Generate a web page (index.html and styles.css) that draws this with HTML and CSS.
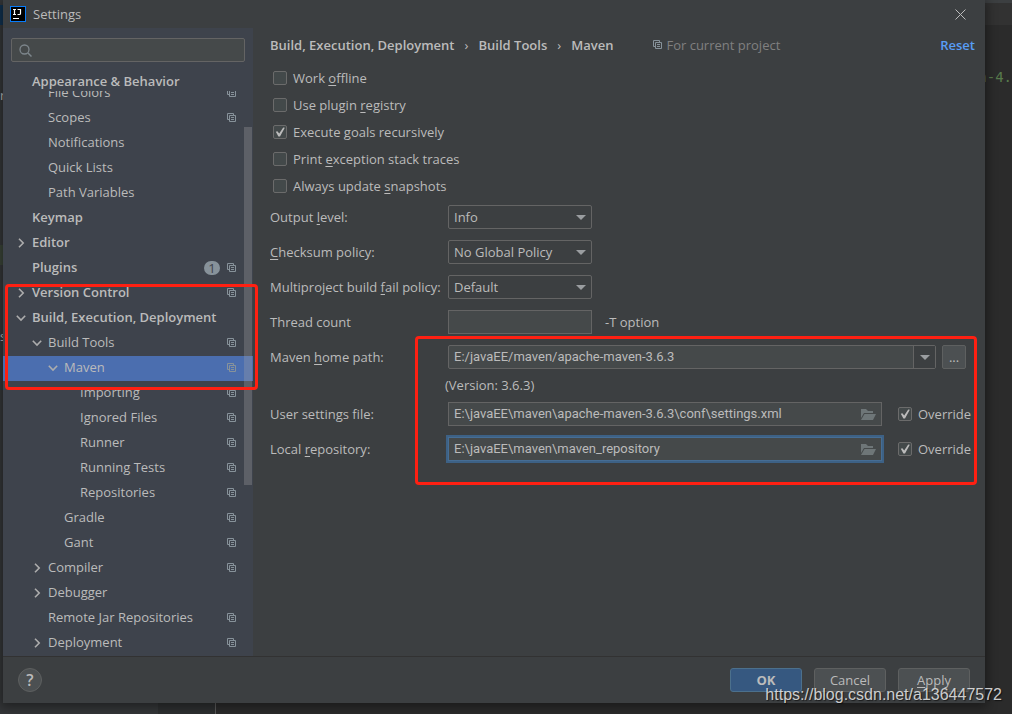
FILE: index.html
```html
<!DOCTYPE html>
<html lang="en">
<head>
<meta charset="utf-8">
<title>Settings</title>
<link rel="stylesheet" href="styles.css">
</head>
<body>
<svg class="defs" aria-hidden="true">
  <symbol id="copy" viewBox="0 0 9 9"><path d="M2 6.500H.5v-6h6V2M2.500 2.500h6v6h-6zM4 4.500h3M4 6.500h3" fill="none" stroke="currentColor"/></symbol>
  <symbol id="right" viewBox="0 0 10 10"><path d="M3 .8l4.200 4.200-4.200 4.200" fill="none" stroke="currentColor" stroke-width="1.600"/></symbol>
  <symbol id="down" viewBox="0 0 10 10"><path d="M.8 2.800l4.200 4.200 4.200-4.200" fill="none" stroke="currentColor" stroke-width="1.600"/></symbol>
  <symbol id="folder" viewBox="0 0 16 12"><path d="M1 10V1h5l2 2h5v2H4z" fill="currentColor"/><path d="M4.500 6H16l-3 6H1z" fill="currentColor"/></symbol>
</svg>

<div class="backdrop" aria-hidden="true">
  <div class="edge-left"><span class="frag frag-tab"></span><span class="frag frag-r">r</span><span class="frag frag-hl"></span><span class="frag frag-s">s</span></div>
  <div class="edge-right"><span class="code">n-4.</span></div>
  <div class="edge-bottom"><span class="gutter"></span></div>
</div>

<main class="dialog">
  <header class="titlebar">
    <svg class="logo" viewBox="0 0 16 16"><path fill="#087cfa" d="M0 0h16v16H0z"/><path fill="#000" d="M1 1h14v14H1z"/><path d="M3 3.500h3M4.500 3v6M3 8.500h3M7.500 3.500h3.500M10.500 3v4.500q0 1-1 1h-2" fill="none" stroke="#fff" stroke-width="1.200"/><path fill="#fff" d="M3 12h6v1H3z"/></svg>
    <h1>Settings</h1>
    <button class="close" aria-label="Close"><svg viewBox="0 0 11 11"><path d="M.5.5l10 10M10.500.5l-10 10" stroke="currentColor" fill="none"/></svg></button>
  </header>

  <div class="body">
    <nav class="sidebar">
      <div class="search">
        <svg viewBox="0 0 13 13"><circle cx="5.500" cy="5.500" r="4.500" fill="none" stroke="currentColor" stroke-width="1.300"/><path d="M9 9l3.500 3.500" stroke="currentColor" stroke-width="1.500"/></svg>
        <input type="text" aria-label="Search settings">
      </div>
      <div class="group-head">Appearance &amp; Behavior</div>
      <div class="viewport">
        <ul class="tree">
          <li class="l1"><i></i><span>File Colors</span><svg class="copy"><use href="#copy"/></svg></li>
          <li class="l1"><i></i><span>Scopes</span><svg class="copy"><use href="#copy"/></svg></li>
          <li class="l1"><i></i><span>Notifications</span></li>
          <li class="l1"><i></i><span>Quick Lists</span></li>
          <li class="l1"><i></i><span>Path Variables</span></li>
          <li class="top"><i></i><span>Keymap</span></li>
          <li class="top"><svg class="arrow"><use href="#right"/></svg><span>Editor</span></li>
          <li class="top"><i></i><span>Plugins</span><b class="badge">1</b><svg class="copy"><use href="#copy"/></svg></li>
          <li class="top"><svg class="arrow"><use href="#right"/></svg><span>Version Control</span><svg class="copy"><use href="#copy"/></svg></li>
          <li class="top"><svg class="arrow"><use href="#down"/></svg><span>Build, Execution, Deployment</span></li>
          <li class="l1"><svg class="arrow"><use href="#down"/></svg><span>Build Tools</span><svg class="copy"><use href="#copy"/></svg></li>
          <li class="l2 selected"><svg class="arrow"><use href="#down"/></svg><span>Maven</span><svg class="copy"><use href="#copy"/></svg></li>
          <li class="l3"><i></i><span>Importing</span><svg class="copy"><use href="#copy"/></svg></li>
          <li class="l3"><i></i><span>Ignored Files</span><svg class="copy"><use href="#copy"/></svg></li>
          <li class="l3"><i></i><span>Runner</span><svg class="copy"><use href="#copy"/></svg></li>
          <li class="l3"><i></i><span>Running Tests</span><svg class="copy"><use href="#copy"/></svg></li>
          <li class="l3"><i></i><span>Repositories</span><svg class="copy"><use href="#copy"/></svg></li>
          <li class="l2"><i></i><span>Gradle</span><svg class="copy"><use href="#copy"/></svg></li>
          <li class="l2"><i></i><span>Gant</span><svg class="copy"><use href="#copy"/></svg></li>
          <li class="l1"><svg class="arrow"><use href="#right"/></svg><span>Compiler</span><svg class="copy"><use href="#copy"/></svg></li>
          <li class="l1"><svg class="arrow"><use href="#right"/></svg><span>Debugger</span></li>
          <li class="l1"><i></i><span>Remote Jar Repositories</span><svg class="copy"><use href="#copy"/></svg></li>
          <li class="l1"><svg class="arrow"><use href="#right"/></svg><span>Deployment</span><svg class="copy"><use href="#copy"/></svg></li>
        </ul>
        <div class="scrollbar"></div>
      </div>
    </nav>

    <section class="content">
      <div class="crumbs">
        <b>Build, Execution, Deployment</b><span class="sep">›</span><b>Build Tools</b><span class="sep">›</span><b>Maven</b>
        <span class="scope"><svg class="copy"><use href="#copy"/></svg>For current project</span>
        <a class="reset" href="#">Reset</a>
      </div>

      <div class="checks">
        <label><input type="checkbox"><span>Work <u>o</u>ffline</span></label>
        <label><input type="checkbox"><span>Use plugin <u>r</u>egistry</span></label>
        <label><input type="checkbox" checked><span>Execute <u>g</u>oals recursively</span></label>
        <label><input type="checkbox"><span>Print <u>e</u>xception stack traces</span></label>
        <label><input type="checkbox"><span>Always update <u>s</u>napshots</span></label>
      </div>

      <form class="form">
        <label for="level">Output <u>l</u>evel:</label>
        <div class="line"><span class="select"><select id="level"><option>Info</option></select></span></div>
        <label for="checksum"><u>C</u>hecksum policy:</label>
        <div class="line"><span class="select"><select id="checksum"><option>No Global Policy</option></select></span></div>
        <label for="fail">Multiproject build <u>f</u>ail policy:</label>
        <div class="line"><span class="select"><select id="fail"><option>Default</option></select></span></div>
        <label for="threads">Thread count</label>
        <div class="line"><input class="field short" id="threads" type="text"><span class="hint">-T option</span></div>
        <label for="home">Maven <u>h</u>ome path:</label>
        <div class="line home"><span class="combo"><input id="home" type="text" value="E:/javaEE/maven/apache-maven-3.6.3"><button type="button" aria-label="Show paths"></button></span><button class="more" type="button">...</button></div>
        <div class="version">(Version: 3.6.3)</div>
        <label for="settings">User settings file:</label>
        <div class="line file"><span class="field path"><input id="settings" type="text" value="E:\javaEE\maven\apache-maven-3.6.3\conf\settings.xml"><svg><use href="#folder"/></svg></span><label class="over"><input type="checkbox" checked><span>Override</span></label></div>
        <label for="repo">Local <u>r</u>epository:</label>
        <div class="line file"><span class="field path focused"><input id="repo" type="text" value="E:\javaEE\maven\maven_repository"><svg><use href="#folder"/></svg></span><label class="over"><input type="checkbox" checked><span>Override</span></label></div>
      </form>
    </section>
  </div>

  <footer class="footer">
    <button class="help" aria-label="Help">?</button>
    <button class="btn primary">OK</button>
    <button class="btn">Cancel</button>
    <button class="btn"><u>A</u>pply</button>
  </footer>
</main>

<div class="mark mark-tree"></div>
<div class="mark mark-form"></div>
<div class="watermark">https://blog.csdn.net/a136447572</div>
</body>
</html>
```
FILE: styles.css
```css
* { box-sizing: border-box; }
body {
  margin: 0;
  position: relative;
  min-height: 100vh;
  overflow: hidden;
  background: #2b2b2b;
  color: #bbbbbb;
  font: 13px/18px "Open Sans", "Noto Sans", sans-serif;
}
input, select, button { font: inherit; color: inherit; }
b { font-weight: 600; }
.defs { position: absolute; width: 0; height: 0; }
u { text-underline-offset: 2px; }

.backdrop { position: absolute; inset: 0; overflow: hidden; }
.edge-left { position: absolute; left: 0; top: 0; bottom: 0; width: 158px; background: #343638; }
.frag { position: absolute; left: 0; width: 3px; overflow: hidden; }
.frag-tab { top: 5px; height: 20px; background: #10314f; }
.frag-r { top: 86px; }
.frag-hl { top: 245px; height: 20px; background: #3a4438; }
.frag-s { top: 327px; }
.edge-right { position: absolute; right: 0; top: 0; width: 60px; height: 25px; background: #323232; border-top: 3px solid #3c3f41; }
.code { position: absolute; right: 0; top: 65px; color: #587a4c; font: 14px/18px "DejaVu Sans Mono", monospace; }
.edge-bottom { position: absolute; left: 158px; right: 0; bottom: 0; height: 14px; display: flex; }
.gutter { width: 58px; background: #2d2f30; border-right: 1px solid #5a5a5a; }

.dialog {
  position: relative;
  margin: 0 27px 11px 3px;
  min-height: calc(100vh - 11px);
  display: flex;
  flex-direction: column;
  background: #3c3f41;
  box-shadow: 0 2px 10px 2px rgba(0, 0, 0, .4);
}
.titlebar { display: flex; align-items: center; gap: 7px; height: 28px; padding: 0 19px 0 7px; }
.logo { width: 16px; height: 16px; }
.titlebar h1 { margin: 0; flex: 1; font-size: 13px; font-weight: 400; }
.close { display: flex; padding: 0; border: 0; background: none; }
.close svg { width: 11px; height: 11px; }

.body { flex: 1; display: flex; }
.sidebar { width: 250px; display: flex; flex-direction: column; background: #3e434c; }
.search {
  display: flex;
  align-items: center;
  gap: 8px;
  height: 24px;
  margin: 10px 8px 8px;
  padding: 0 7px;
  border: 1px solid #646464;
  border-radius: 2px;
  background: #45494a;
}
.search svg { width: 13px; height: 13px; color: #7d868c; }
.search input { flex: 1; min-width: 0; border: 0; outline: 0; background: none; }
.group-head { height: 21px; padding-left: 29px; line-height: 22px; font-weight: 600; }
.viewport { position: relative; flex: 1; overflow: hidden; }
.tree { list-style: none; margin: -10px 0 0; padding: 0; }
.tree li { display: flex; align-items: center; height: 25px; padding-right: 17px; padding-bottom: 2px; line-height: 19px; }
.tree li span { flex: 1; white-space: nowrap; }
.tree i, .arrow { width: 10px; height: 10px; margin-right: 6px; flex: none; }
.arrow { color: #adadad; }
.tree .top { padding-left: 13px; font-weight: 600; }
.l1 { padding-left: 29px; }
.l2 { padding-left: 45px; }
.l3 { padding-left: 61px; }
.copy { width: 9px; height: 9px; color: #87929a; flex: none; }
.selected { background: #4b6eaf; }
.badge {
  width: 16px;
  height: 14px;
  margin-right: 7px;
  border-radius: 7px;
  background: #87929a;
  color: #3e434c;
  font-weight: 400;
  line-height: 14px;
  text-align: center;
}
.scrollbar { position: absolute; right: 1px; top: 36px; width: 8px; height: 358px; background: rgba(166, 166, 166, .3); }

.content { flex: 1; min-width: 0; padding: 7px 10px 0 17px; }
.crumbs { display: flex; align-items: center; height: 19px; white-space: nowrap; }
.sep { width: 24px; text-align: center; }
.scope { display: flex; align-items: center; gap: 4px; margin-left: 40px; color: #808080; }
.reset { margin-left: auto; color: #589df6; font-weight: 600; text-decoration: none; }
.checks { display: flex; flex-direction: column; gap: 9px; margin-top: 15px; padding-left: 3px; }
.checks label, .over { display: flex; align-items: center; gap: 6px; }
input[type="checkbox"] {
  appearance: none;
  position: relative;
  flex: none;
  width: 14px;
  height: 14px;
  margin: 0;
  border: 1px solid #6b6b6b;
  border-radius: 2px;
  background: #43494a;
}
input[type="checkbox"]:checked::before {
  content: "";
  position: absolute;
  inset: 1px;
  background: #bbbbbb;
  clip-path: polygon(8% 48%, 24% 42%, 42% 66%, 82% 4%, 98% 8%, 50% 96%, 34% 96%);
}
.form { display: grid; grid-template-columns: 178px 1fr; row-gap: 11px; align-items: center; margin-top: 10px; padding-right: 6px; }
.line { display: flex; align-items: center; height: 24px; }
.select { position: relative; width: 144px; height: 24px; }
.select select {
  appearance: none;
  width: 100%;
  height: 100%;
  padding: 0 5px;
  border: 1px solid #646464;
  border-radius: 2px;
  background: #3c3f41;
}
.select::after, .combo button::after {
  content: "";
  border: 5px solid transparent;
  border-top-color: #9a9da0;
  border-bottom: 0;
}
.select::after { position: absolute; right: 6px; top: 10px; }
.field { height: 24px; padding: 0 5px; border: 1px solid #646464; background: #45494a; }
.short { width: 144px; }
.hint { margin-left: 13px; }
.home { gap: 6px; padding-right: 3px; }
.combo { flex: 1; display: flex; height: 24px; border: 1px solid #646464; border-radius: 2px; background: #45494a; }
.combo input, .path input {
  flex: 1;
  min-width: 0;
  border: 0;
  outline: 0;
  padding: 0;
  background: none;
  font-family: Roboto, "Open Sans", sans-serif;
}
.combo input { padding-left: 5px; }
.combo button { display: flex; align-items: center; justify-content: center; width: 22px; padding: 0; border: 0; border-left: 1px solid #646464; background: #3c3f41; }
.more { width: 24px; height: 24px; padding: 0; border: 1px solid #5e6060; border-radius: 2px; background: #4c5052; }
.version { grid-column: 2; height: 11px; margin-left: -3px; line-height: 11px; }
.file { gap: 16px; }
.path { flex: 1; display: flex; align-items: center; }
.path svg { width: 16px; height: 12px; color: #6e7678; }
.over { flex: none; width: 71px; }
.focused { border-color: #466d94; box-shadow: 0 0 0 2px #3d6185; }

.footer { display: flex; align-items: center; gap: 12px; height: 47px; padding: 0 15px; border-top: 1px solid #323232; }
.help { width: 24px; height: 24px; margin-right: auto; padding: 0; border: 1px solid #5e6060; border-radius: 50%; background: #4c5052; font-size: 16px; font-weight: 600; line-height: 20px; }
.btn { width: 72px; height: 24px; padding: 0; border: 1px solid #5e6060; border-radius: 3px; background: #4c5052; }
.primary { border-color: #4c708c; background: #365880; font-weight: 700; }

.mark { position: absolute; border: 3px solid #ff2012; border-radius: 4px; }
.mark-tree { left: 5px; top: 284px; width: 253px; height: 106px; }
.mark-form { left: 415px; top: 336px; width: 562px; height: 149px; }
.watermark {
  position: absolute;
  right: 10px;
  bottom: 9px;
  color: rgba(235, 235, 235, .85);
  font: 16px/20px "Liberation Sans", Arial, sans-serif;
  text-shadow: 1px 1px 1px rgba(0, 0, 0, .6);
}
```
